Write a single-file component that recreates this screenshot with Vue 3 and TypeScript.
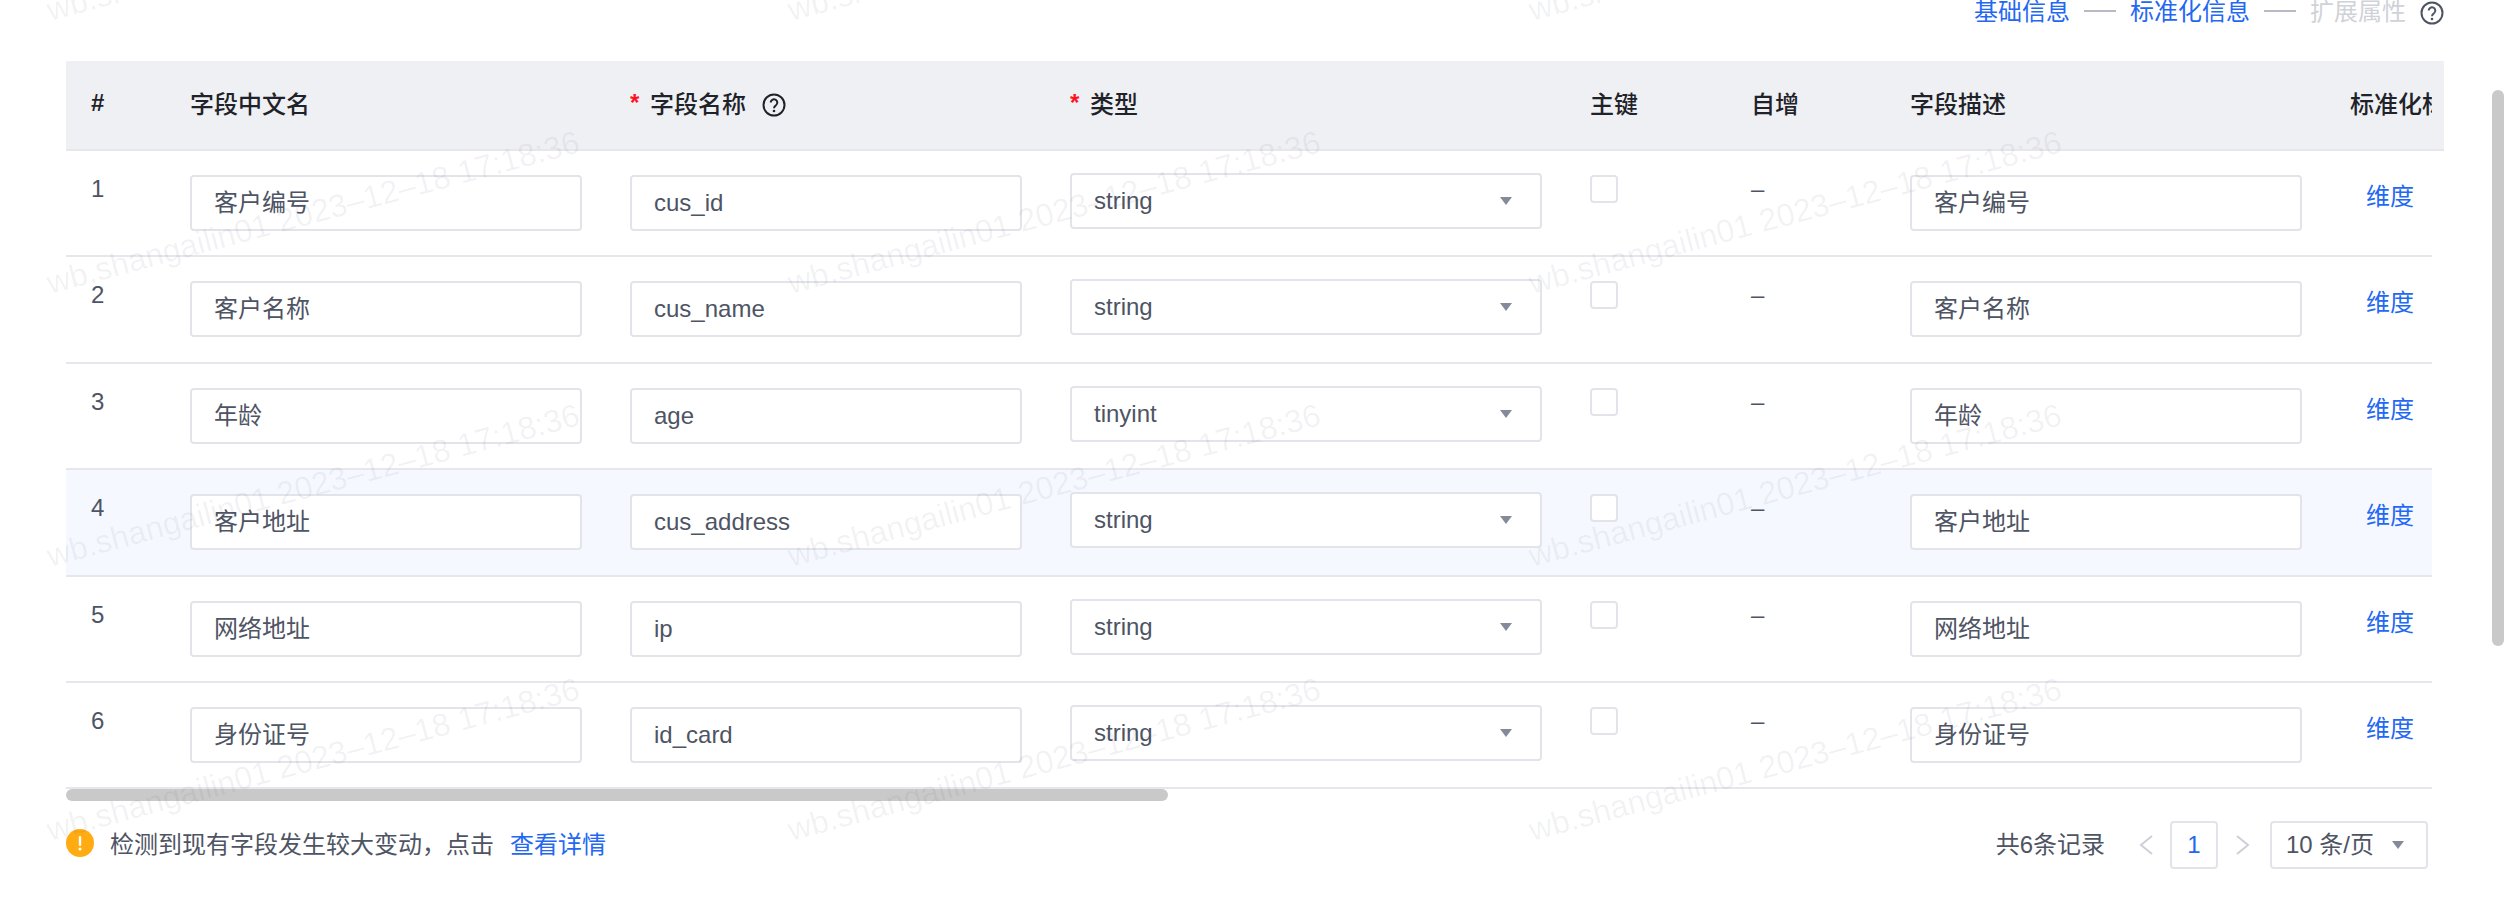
<script setup lang="ts">
interface Field {
  id: number
  cn: string
  name: string
  type: string
}

const fields: Field[] = [
  { id: 1, cn: '客户编号', name: 'cus_id', type: 'string' },
  { id: 2, cn: '客户名称', name: 'cus_name', type: 'string' },
  { id: 3, cn: '年龄', name: 'age', type: 'tinyint' },
  { id: 4, cn: '客户地址', name: 'cus_address', type: 'string' },
  { id: 5, cn: '网络地址', name: 'ip', type: 'string' },
  { id: 6, cn: '身份证号', name: 'id_card', type: 'string' },
]

const marks: { left: number; top: number }[] = []
for (const y of [20, 293, 566, 840]) {
  for (const x of [50, 791, 1532]) {
    marks.push({ left: x, top: y - 26 })
  }
}
</script>

<template>
  <div class="page">
    <nav class="steps">
      <span class="step on">基础信息</span>
      <i class="step-line"></i>
      <span class="step on">标准化信息</span>
      <i class="step-line"></i>
      <span class="step off">扩展属性</span>
      <svg class="help" viewBox="0 0 24 24" width="24" height="24" fill="none">
        <circle cx="12" cy="12" r="10.5" stroke="#4e5464" stroke-width="2" />
        <path d="M8.7 9.6a3.3 3.3 0 1 1 5.2 2.7c-1.2.8-1.9 1.4-1.9 2.9" stroke="#4e5464" stroke-width="2" />
        <circle cx="12" cy="18" r="1.3" fill="#4e5464" />
      </svg>
    </nav>

    <section class="table">
      <div class="head">
        <div class="clip">
          <div class="grid head-row">
            <div class="th hash">#</div>
            <div class="th">字段中文名</div>
            <div class="th"><span class="req">*</span>字段名称
              <svg class="th-help" viewBox="0 0 24 24" width="24" height="24" fill="none">
                <circle cx="12" cy="12" r="10.5" stroke="#1f2329" stroke-width="2" />
                <path d="M8.7 9.6a3.3 3.3 0 1 1 5.2 2.7c-1.2.8-1.9 1.4-1.9 2.9" stroke="#1f2329" stroke-width="2" />
                <circle cx="12" cy="18" r="1.3" fill="#1f2329" />
              </svg>
            </div>
            <div class="th"><span class="req">*</span>类型</div>
            <div class="th">主键</div>
            <div class="th">自增</div>
            <div class="th">字段描述</div>
            <div class="th">标准化标签</div>
          </div>
        </div>
      </div>

      <div class="clip">
        <div v-for="f in fields" :key="f.id" class="grid row" :class="{ hover: f.id === 4 }">
          <div class="td num">{{ f.id }}</div>
          <div class="td"><div class="input">{{ f.cn }}</div></div>
          <div class="td"><div class="input">{{ f.name }}</div></div>
          <div class="td td-select">
            <div class="select">
              <span>{{ f.type }}</span>
              <svg viewBox="0 0 12 8" width="12" height="8"><path d="M0 0h12L6 8z" fill="#858a99" /></svg>
            </div>
          </div>
          <div class="td"><div class="check"></div></div>
          <div class="td dash">–</div>
          <div class="td"><div class="input">{{ f.cn }}</div></div>
          <div class="td"><a class="link dim">维度</a></div>
        </div>
      </div>

      <div class="hbar"><div class="hthumb"></div></div>
    </section>

    <footer class="foot">
      <div class="notice">
        <svg viewBox="0 0 28 28" width="28" height="28">
          <circle cx="14" cy="14" r="14" fill="#ffab11" />
          <rect x="12.8" y="7" width="2.4" height="10" rx="1" fill="#fff" />
          <circle cx="14" cy="20" r="1.5" fill="#fff" />
        </svg>
        <span class="notice-text">检测到现有字段发生较大变动，点击</span>
        <a class="link">查看详情</a>
      </div>
      <div class="pager">
        <span class="total">共6条记录</span>
        <svg class="prev" viewBox="0 0 14 20" width="14" height="20" fill="none">
          <path d="M13 1 2 10l11 9" stroke="#cdd0d7" stroke-width="2" />
        </svg>
        <span class="page-no">1</span>
        <svg class="next" viewBox="0 0 14 20" width="14" height="20" fill="none">
          <path d="m1 1 11 9-11 9" stroke="#cdd0d7" stroke-width="2" />
        </svg>
        <div class="size">
          <span class="size-text">10 条/页</span>
          <svg viewBox="0 0 12 8" width="12" height="8"><path d="M0 0h12L6 8z" fill="#858a99" /></svg>
        </div>
      </div>
    </footer>

    <div class="vthumb"></div>

    <div class="marks">
      <span v-for="(m, i) in marks" :key="i" class="mark" :style="{ left: m.left + 'px', top: m.top + 'px' }">wb.shangailin01 2023–12–18 17:18:36</span>
    </div>
  </div>
</template>

<style>
html,
body {
  margin: 0;
  background: #fff;
  overflow: hidden;
}
</style>

<style scoped>
.page {
  position: relative;
  width: 2504px;
  height: 898px;
  overflow: hidden;
  box-sizing: border-box;
  padding-left: 66px;
  font-family: "Liberation Sans", "Noto Sans CJK SC", sans-serif;
  font-size: 24px;
  color: #4e5464;
  background: #fff;
}

.steps {
  display: flex;
  align-items: flex-start;
  justify-content: flex-end;
  gap: 14px;
  width: 2378px;
  height: 61px;
  line-height: 24px;
}
.step-line {
  width: 32px;
  height: 2px;
  margin-top: 10px;
  background: #b9b9c6;
}
.step.on {
  color: #2468f2;
}
.step.off {
  color: #d0d2d8;
}
.help {
  margin-top: 1px;
}

.table {
  width: 2378px;
}
.head {
  box-sizing: border-box;
  height: 90px;
  padding-right: 12px;
  background: #eff0f4;
  border-bottom: 2px solid #e6e6ec;
}
.clip {
  width: 2366px;
  overflow: hidden;
}
.grid {
  display: grid;
  grid-template-columns: 100px 440px 440px 520px 161px 159px 440px 200px;
}
.head-row {
  height: 88px;
  align-items: center;
}
.th {
  display: flex;
  align-items: center;
  padding-left: 24px;
  padding-bottom: 5px;
  color: #1f2329;
  font-weight: 500;
  white-space: nowrap;
}
.th.hash {
  padding-left: 25px;
  font-weight: 700;
}
.req {
  width: 20px;
  color: #ff1220;
  font-weight: 700;
}
.th-help {
  margin-left: 16px;
  margin-top: 5px;
}

.row {
  box-sizing: border-box;
  height: 106.4px;
  border-bottom: 2px solid #e6e6ec;
}
.row.hover {
  background: #f5f8ff;
}
.td {
  box-sizing: border-box;
  padding: 24px 24px 0;
  white-space: nowrap;
}
.td.num {
  padding-left: 25px;
  line-height: 28px;
}
.td-select {
  padding-top: 22px;
}
.input,
.select,
.check,
.page-no,
.size {
  box-sizing: border-box;
  background: #fff;
  border: 2px solid #e3e4ea;
  border-radius: 4px;
}
.input {
  height: 56px;
  padding-left: 22px;
  line-height: 52px;
}
.select {
  display: flex;
  align-items: center;
  justify-content: space-between;
  height: 56px;
  padding: 0 28px 0 22px;
}
.check {
  width: 28px;
  height: 28px;
}
.dash {
  line-height: 28px;
}
.link {
  color: #2468f2;
}
.link.dim {
  display: block;
  margin-left: 16px;
  line-height: 44px;
}

.hbar {
  height: 12px;
}
.hthumb {
  width: 1102px;
  height: 12px;
  border-radius: 6px;
  background: #c9c9c9;
}

.foot {
  display: flex;
  align-items: center;
  justify-content: space-between;
  width: 2362px;
  height: 48px;
  margin-top: 20px;
}
.notice {
  display: flex;
  align-items: center;
  padding-bottom: 5px;
}
.notice-text {
  margin: 0 16px 0 16px;
}
.pager {
  display: flex;
  align-items: center;
}
.total,
.size-text {
  padding-bottom: 5px;
}
.prev {
  margin: 0 17px 0 34px;
}
.next {
  margin: 0 20px 0 18px;
}
.page-no {
  width: 48px;
  height: 48px;
  line-height: 44px;
  text-align: center;
  color: #2468f2;
}
.size {
  display: flex;
  align-items: center;
  justify-content: space-between;
  width: 158px;
  height: 48px;
  padding: 0 22px 0 14px;
}

.vthumb {
  position: absolute;
  top: 90px;
  right: 0;
  width: 12px;
  height: 556px;
  border-radius: 6px;
  background: #c9c9c9;
}

.marks {
  position: absolute;
  inset: 0;
  overflow: hidden;
  pointer-events: none;
}
.mark {
  position: absolute;
  font-size: 32px;
  line-height: 32px;
  white-space: nowrap;
  color: rgba(60, 60, 80, 0.065);
  transform: rotate(-15deg);
  transform-origin: 0 26px;
}
</style>
